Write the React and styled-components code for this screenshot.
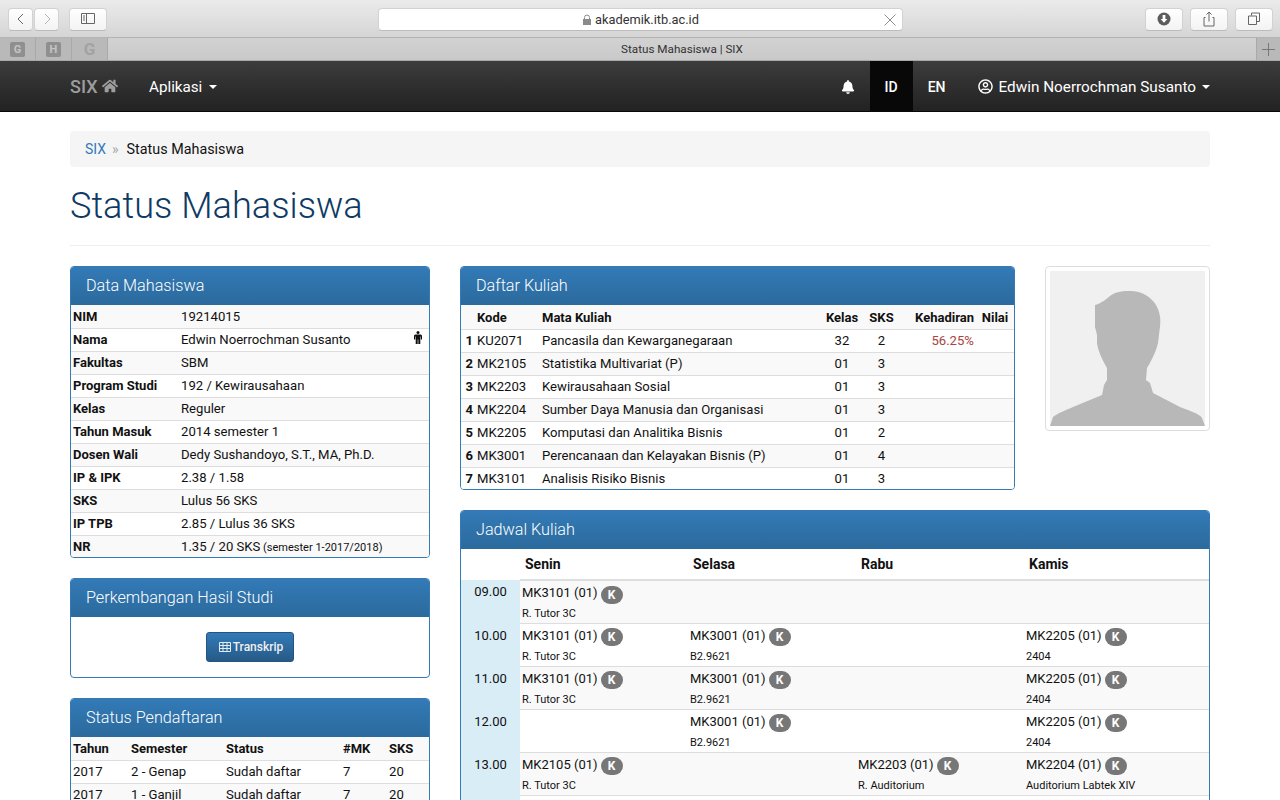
import React from "react";
import styled, { createGlobalStyle } from "styled-components";
import { FaHome, FaBell, FaRegUserCircle } from "react-icons/fa";

const GlobalStyle = createGlobalStyle`
  html, body {
    margin: 0;
    padding: 0;
    height: 800px;
    overflow: hidden;
    background: #fff;
    font-family: Roboto, "Liberation Sans", sans-serif;
    font-size: 14px;
    color: #111;
  }
  * { box-sizing: border-box; }
`;

const Toolbar = styled.div`
  height: 38px;
  display: flex;
  align-items: center;
  padding: 1px 7px 0 8px;
  background: linear-gradient(#ebebeb, #d5d5d5);
  border-bottom: 1px solid #b4b4b4;
`;

const ToolButton = styled.div`
  width: ${props => props.$w || 38}px;
  height: 23px;
  margin-left: ${props => props.$ml || 0}px;
  background: linear-gradient(#ffffff, #f3f3f3);
  border: 1px solid #d2d2d2;
  border-bottom-color: #bcbcbc;
  border-radius: 4px;
  display: flex;
  align-items: center;
  justify-content: center;
  flex: none;
`;

const UrlBar = styled.div`
  width: 525px;
  height: 23px;
  margin-left: 271px;
  margin-right: 242px;
  flex: none;
  position: relative;
  background: #fff;
  border: 1px solid #d2d2d2;
  border-bottom-color: #bcbcbc;
  border-radius: 4px;
  display: flex;
  align-items: center;
  justify-content: center;
  gap: 3px;
  font-size: 12.8px;
  color: #333;
`;

const UrlClose = styled.svg`
  position: absolute;
  right: 6px;
  top: 5px;
`;

const TabBar = styled.div`
  height: 23px;
  display: flex;
  background: linear-gradient(#d2d2d2, #c9c9c9);
  border-bottom: 1px solid #a8a8a8;
`;

const FavTab = styled.div`
  width: 36px;
  background: #b9b9b9;
  border-right: 1px solid #a9a9a9;
  display: flex;
  align-items: center;
  justify-content: center;
`;

const FavIcon = styled.span`
  width: 15px;
  height: 15px;
  border-radius: 2px;
  background: ${props => (props.$plain ? "transparent" : "#8f8f8f")};
  color: ${props => (props.$plain ? "#a2a2a2" : "#c4c4c4")};
  font-size: ${props => (props.$plain ? 17 : 11)}px;
  font-weight: 700;
  display: flex;
  align-items: center;
  justify-content: center;
`;

const ActiveTab = styled.div`
  flex: 1;
  text-align: center;
  font-size: 11.7px;
  line-height: 23px;
  color: #333;
`;

const NewTab = styled.div`
  width: 24px;
  background: #b9b9b9;
  border-left: 1px solid #a9a9a9;
  display: flex;
  align-items: center;
  justify-content: center;
`;

const Navbar = styled.nav`
  height: 51px;
  padding: 0 70px;
  display: flex;
  align-items: stretch;
  background: linear-gradient(#3c3c3c, #222222);
  border-bottom: 1px solid #080808;
  color: #fff;
`;

const Brand = styled.div`
  display: flex;
  align-items: center;
  gap: 4px;
  font-size: 18px;
  font-weight: 500;
  color: #9d9d9d;
  width: 64px;
`;

const NavItem = styled.div`
  display: flex;
  align-items: center;
  gap: ${props => props.$gap || 0}px;
  padding: 1px ${props => (props.$last ? 0 : 15)}px 0 15px;
  margin-left: ${props => (props.$last ? 2 : 0)}px;
  font-size: ${props => props.$size || 14}px;
  font-weight: ${props => props.$weight || 500};
  background: ${props => (props.$active ? "#080808" : "transparent")};
`;

const Spacer = styled.div`
  flex: 1;
`;

const Caret = styled.span`
  width: 0;
  height: 0;
  margin-left: ${props => props.$ml ?? 7}px;
  border-top: 4px solid #fff;
  border-left: 4px solid transparent;
  border-right: 4px solid transparent;
`;

const Container = styled.main`
  padding: 19px 70px 0;
`;

const Breadcrumb = styled.div`
  height: 36px;
  padding: 0 15px;
  display: flex;
  align-items: center;
  background: #f5f5f5;
  border-radius: 4px;
  font-size: 14px;
`;

const CrumbLink = styled.span`
  color: #337ab7;
`;

const CrumbSep = styled.span`
  color: #aaa;
  margin: 0 8px 0 6px;
`;

const CrumbCurrent = styled.span`
  font-size: 14.35px;
`;

const Title = styled.h1`
  margin: 19px 0 19px;
  font-size: 36.2px;
  line-height: 40px;
  font-weight: 300;
  color: #0e3a63;
`;

const Rule = styled.hr`
  margin: 0 0 20px;
  border: 0;
  border-top: 1px solid #eee;
`;

const Columns = styled.div`
  display: grid;
  grid-template-columns: 360px 750px;
  gap: 30px;
  align-items: start;
`;

const TopRow = styled.div`
  display: grid;
  grid-template-columns: 555px 165px;
  gap: 30px;
  align-items: start;
`;

const Panel = styled.section`
  margin-bottom: 20px;
  border: 1px solid #337ab7;
  border-radius: 4px;
  overflow: hidden;
  background: #fff;
`;

const PanelHeading = styled.h3`
  margin: 0;
  height: 38px;
  padding: 0 15px 2px;
  display: flex;
  align-items: center;
  font-size: 16.2px;
  font-weight: 300;
  color: #fff;
  background: linear-gradient(#337ab7, #2b6a9c);
`;

const PanelBody = styled.div`
  height: 60px;
  display: flex;
  align-items: center;
  justify-content: center;
`;

const Button = styled.div`
  height: 30px;
  padding: 0 10px 0 12px;
  display: flex;
  align-items: center;
  gap: 2px;
  border: 1px solid #245580;
  border-radius: 3px;
  font-size: 12px;
  font-weight: 500;
  color: #f0f0f0;
  background: linear-gradient(#337ab7, #265a88);
`;

const Table = styled.table`
  width: 100%;
  margin-bottom: -1px;
  table-layout: fixed;
  border-collapse: collapse;
  font-size: 13px;
`;

const Row = styled.tr`
  height: ${props => props.$h || 23}px;
  background: ${props => (props.$striped ? "#f9f9f9" : "#fff")};
  &:not(:first-child) { border-top: 1px solid #ddd; }
`;

const Th = styled.th`
  padding: ${props => (props.$low ? 2 : 0)}px 2px 0;
  text-align: ${props => props.$align || "left"};
  font-weight: 700;
  color: #111;
`;

const Td = styled.td`
  padding: 0 2px;
  position: relative;
  text-align: ${props => props.$align || "left"};
  color: ${props => props.$color || "#111"};
  font-size: ${props => (props.$bold ? 13 : 13.13)}px;
  font-weight: ${props => (props.$bold ? 700 : 400)};
`;

const Small = styled.small`
  font-size: 11px;
`;

const GenderIcon = styled.svg`
  position: absolute;
  right: 7px;
  top: 2px;
`;

const Photo = styled.div`
  width: 165px;
  height: 165px;
  padding: 4px;
  border: 1px solid #ddd;
  border-radius: 4px;
  background: #fff;
`;

const ScheduleTable = styled.table`
  width: 100%;
  table-layout: fixed;
  border-collapse: collapse;
`;

const DayRow = styled.tr`
  height: 31px;
`;

const DayTh = styled.th`
  padding: 0 5px;
  text-align: left;
  font-size: 14px;
  font-weight: 700;
  color: #111;
  border-bottom: ${props => (props.$blank ? "0" : "2px solid #ddd")};
`;

const HourRow = styled.tr`
  height: 43px;
  background: ${props => (props.$striped ? "#f9f9f9" : "#fff")};
  border-bottom: 1px solid #ddd;
`;

const HourCell = styled.td`
  padding: 4px 0 0;
  vertical-align: top;
  text-align: center;
  font-size: 13px;
  color: #111;
  background: #d9edf7;
  border-bottom: 1px solid #d9edf7;
`;

const SlotCell = styled.td`
  padding: 2px 2px 0;
  vertical-align: top;
`;

const SlotTop = styled.div`
  display: flex;
  align-items: center;
  gap: 3px;
  height: 19px;
  font-size: 13px;
  color: #111;
`;

const Badge = styled.span`
  width: 22px;
  height: 18px;
  margin-top: 4px;
  border-radius: 9px;
  background: #777;
  color: #fff;
  font-size: 12px;
  font-weight: 700;
  display: flex;
  align-items: center;
  justify-content: center;
`;

const Room = styled.div`
  margin-top: 5px;
  font-size: 11px;
  line-height: 14px;
  color: #111;
`;

const dataRows = [
  ["NIM", "19214015"],
  ["Nama", "Edwin Noerrochman Susanto"],
  ["Fakultas", "SBM"],
  ["Program Studi", "192 / Kewirausahaan"],
  ["Kelas", "Reguler"],
  ["Tahun Masuk", "2014 semester 1"],
  ["Dosen Wali", "Dedy Sushandoyo, S.T., MA, Ph.D."],
  ["IP & IPK", "2.38 / 1.58"],
  ["SKS", "Lulus 56 SKS"],
  ["IP TPB", "2.85 / Lulus 36 SKS"],
  ["NR", "1.35 / 20 SKS"],
];

const courses = [
  ["KU2071", "Pancasila dan Kewarganegaraan", "32", "2", "56.25%"],
  ["MK2105", "Statistika Multivariat (P)", "01", "3", ""],
  ["MK2203", "Kewirausahaan Sosial", "01", "3", ""],
  ["MK2204", "Sumber Daya Manusia dan Organisasi", "01", "3", ""],
  ["MK2205", "Komputasi dan Analitika Bisnis", "01", "2", ""],
  ["MK3001", "Perencanaan dan Kelayakan Bisnis (P)", "01", "4", ""],
  ["MK3101", "Analisis Risiko Bisnis", "01", "3", ""],
];

const tutor = ["MK3101 (01)", "R. Tutor 3C"];
const bisnis = ["MK3001 (01)", "B2.9621"];
const komputasi = ["MK2205 (01)", "2404"];

const schedule = [
  ["09.00", tutor, null, null, null],
  ["10.00", tutor, bisnis, null, komputasi],
  ["11.00", tutor, bisnis, null, komputasi],
  ["12.00", null, bisnis, null, komputasi],
  ["13.00", ["MK2105 (01)", "R. Tutor 3C"], null, ["MK2203 (01)", "R. Auditorium"], ["MK2204 (01)", "Auditorium Labtek XIV"]],
  ["", null, null, null, null],
];

const Line = ({ d, w = 16, h = 16 }) => (
  <svg width={w} height={h} viewBox={`0 0 ${w} ${h}`} fill="none" stroke="#666" strokeWidth="1">
    <path d={d} />
  </svg>
);

const Slot = ({ item }) => (
  <SlotCell>
    {item && (
      <>
        <SlotTop>
          {item[0]} <Badge>K</Badge>
        </SlotTop>
        <Room>{item[1]}</Room>
      </>
    )}
  </SlotCell>
);

export default function App() {
  return (
    <>
      <GlobalStyle />
      <Toolbar>
        <ToolButton $w={25}>
          <Line d="M10 3 L5 8 L10 13" />
        </ToolButton>
        <ToolButton $w={25} $ml={1}>
          <svg width="16" height="16" viewBox="0 0 16 16" fill="none" stroke="#b5b5b5">
            <path d="M6 3 L11 8 L6 13" />
          </svg>
        </ToolButton>
        <ToolButton $ml={10}>
          <Line d="M1.5 2.5 H14.5 V12.5 H1.5 Z M6.5 2.5 V12.5 M3 5 H5 M3 7 H5 M3 9 H5" />
        </ToolButton>
        <UrlBar>
          <svg width="10" height="11" viewBox="0 0 10 11">
            <path d="M2.5 5 V3.5 a2.5 2.5 0 0 1 5 0 V5" fill="none" stroke="#8a8a8a" />
            <rect x="1" y="5" width="8" height="6" fill="#8a8a8a" />
          </svg>
          akademik.itb.ac.id
          <UrlClose width="12" height="12" viewBox="0 0 12 12" stroke="#8c8c8c" strokeWidth="1">
            <path d="M0.5 0.5 L11.5 11.5 M11.5 0.5 L0.5 11.5" />
          </UrlClose>
        </UrlBar>
        <ToolButton>
          <svg width="14" height="14" viewBox="0 0 14 14">
            <circle cx="7" cy="7" r="6.5" fill="#5c5c5c" />
            <path d="M5.6 3 H8.4 V7 H10.4 L7 10.8 L3.6 7 H5.6 Z" fill="#fff" />
          </svg>
        </ToolButton>
        <ToolButton $ml={7}>
          <Line d="M4.5 6.5 H3 V15 H13 V6.5 H11.5 M8 10.5 V1 M5.5 3.5 L8 1 L10.5 3.5" />
        </ToolButton>
        <ToolButton $ml={7}>
          <Line d="M5.5 4.5 V2 H13.5 V10.5 H10.5 M2.5 5 H10.5 V13.5 H2.5 Z" />
        </ToolButton>
      </Toolbar>
      <TabBar>
        <FavTab><FavIcon>G</FavIcon></FavTab>
        <FavTab><FavIcon>H</FavIcon></FavTab>
        <FavTab><FavIcon $plain>G</FavIcon></FavTab>
        <ActiveTab>Status Mahasiswa | SIX</ActiveTab>
        <NewTab>
          <svg width="13" height="13" viewBox="0 0 13 13" stroke="#777">
            <path d="M6.5 0 V13 M0 6.5 H13" />
          </svg>
        </NewTab>
      </TabBar>
      <Navbar>
        <Brand>SIX <FaHome size={16} /></Brand>
        <NavItem $size={15.2} $weight={400}>Aplikasi<Caret /></NavItem>
        <Spacer />
        <NavItem><FaBell size={14} /></NavItem>
        <NavItem $active>ID</NavItem>
        <NavItem>EN</NavItem>
        <NavItem $last $size={15.3} $weight={400} $gap={6}>
          <FaRegUserCircle size={15} />
          Edwin Noerrochman Susanto
          <Caret $ml={0} />
        </NavItem>
      </Navbar>
      <Container>
        <Breadcrumb>
          <CrumbLink>SIX</CrumbLink>
          <CrumbSep>»</CrumbSep>
          <CrumbCurrent>Status Mahasiswa</CrumbCurrent>
        </Breadcrumb>
        <Title>Status Mahasiswa</Title>
        <Rule />
        <Columns>
          <div>
            <Panel>
              <PanelHeading>Data Mahasiswa</PanelHeading>
              <Table>
                <colgroup>
                  <col width="108" />
                  <col />
                </colgroup>
                <tbody>
                  {dataRows.map(([label, value], i) => (
                    <Row key={label} $striped={i % 2 === 0}>
                      <Td $bold>{label}</Td>
                      <Td>
                        {value}
                        {label === "NR" && <Small> (semester 1-2017/2018)</Small>}
                        {label === "Nama" && (
                          <GenderIcon width="8" height="13" viewBox="0 0 8 13" fill="#111">
                            <circle cx="4" cy="1.5" r="1.5" />
                            <path d="M1.4 3.4 H6.6 Q8 3.4 8 5 V8.4 H6.8 V5.6 H6.3 V13 H4.3 V8.6 H3.7 V13 H1.7 V5.6 H1.2 V8.4 H0 V5 Q0 3.4 1.4 3.4 Z" />
                          </GenderIcon>
                        )}
                      </Td>
                    </Row>
                  ))}
                </tbody>
              </Table>
            </Panel>
            <Panel>
              <PanelHeading>Perkembangan Hasil Studi</PanelHeading>
              <PanelBody>
                <Button>
                  <svg width="12" height="10" viewBox="0 0 12 10" fill="none" stroke="#e4edf5" strokeWidth="1">
                    <path d="M0.5 0.5 H11.5 V9.5 H0.5 Z M0.5 3.5 H11.5 M0.5 6.5 H11.5 M4 0.5 V9.5 M8 0.5 V9.5" />
                  </svg>
                  Transkrip
                </Button>
              </PanelBody>
            </Panel>
            <Panel>
              <PanelHeading>Status Pendaftaran</PanelHeading>
              <Table>
                <colgroup>
                  <col width="58" />
                  <col width="95" />
                  <col width="117" />
                  <col width="46" />
                  <col />
                </colgroup>
                <tbody>
                  <Row $striped>
                    <Th>Tahun</Th>
                    <Th>Semester</Th>
                    <Th>Status</Th>
                    <Th>#MK</Th>
                    <Th>SKS</Th>
                  </Row>
                  <Row>
                    <Td>2017</Td>
                    <Td>2 - Genap</Td>
                    <Td>Sudah daftar</Td>
                    <Td>7</Td>
                    <Td>20</Td>
                  </Row>
                  <Row $striped>
                    <Td>2017</Td>
                    <Td>1 - Ganjil</Td>
                    <Td>Sudah daftar</Td>
                    <Td>7</Td>
                    <Td>20</Td>
                  </Row>
                </tbody>
              </Table>
            </Panel>
          </div>
          <div>
            <TopRow>
              <Panel>
                <PanelHeading>Daftar Kuliah</PanelHeading>
                <Table>
                  <colgroup>
                    <col width="14" />
                    <col width="65" />
                    <col width="281" />
                    <col width="42" />
                    <col width="37" />
                    <col width="76" />
                    <col />
                  </colgroup>
                  <tbody>
                    <Row $h={24} $striped>
                      <Th $low />
                      <Th $low>Kode</Th>
                      <Th $low>Mata Kuliah</Th>
                      <Th $low $align="center">Kelas</Th>
                      <Th $low $align="center">SKS</Th>
                      <Th $low $align="right">Kehadiran</Th>
                      <Th $low $align="center">Nilai</Th>
                    </Row>
                    {courses.map((c, i) => (
                      <Row key={c[0]} $striped={i % 2 === 1}>
                        <Td $bold $align="right">{i + 1}</Td>
                        <Td>{c[0]}</Td>
                        <Td>{c[1]}</Td>
                        <Td $align="center">{c[2]}</Td>
                        <Td $align="center">{c[3]}</Td>
                        <Td $align="right" $color="#a94442">{c[4]}</Td>
                        <Td />
                      </Row>
                    ))}
                  </tbody>
                </Table>
              </Panel>
              <Photo>
                <svg width="155" height="155" viewBox="0 0 155 155">
                  <rect width="155" height="155" fill="#f0f0f0" />
                  <path
                    d="M45 34 C52 32 56 28 60 25 C67 20 74 20 80 20 C92 20 101 26 106 34 C110 41 111 48 110 56 C109 62 109 66 108 72 C106 80 103 87 97 97 L96 109 L100 112 L103 122 L130 136 C140 140 150 143 152 147 L155 155 L0 155 L3 146 C8 142 16 139 23 136 L52 124 L54 114 L57 109 L57 97 C52 88 48 80 47 72 L47 64 L45 56 Z"
                    fill="#b8b8b8"
                  />
                </svg>
              </Photo>
            </TopRow>
            <Panel>
              <PanelHeading>Jadwal Kuliah</PanelHeading>
              <ScheduleTable>
                <colgroup>
                  <col width="59" />
                  <col width="168" />
                  <col width="168" />
                  <col width="168" />
                  <col width="168" />
                  <col />
                </colgroup>
                <thead>
                  <DayRow>
                    <DayTh $blank />
                    <DayTh>Senin</DayTh>
                    <DayTh>Selasa</DayTh>
                    <DayTh>Rabu</DayTh>
                    <DayTh>Kamis</DayTh>
                    <DayTh />
                  </DayRow>
                </thead>
                <tbody>
                  {schedule.map((s, i) => (
                    <HourRow key={i} $striped={i % 2 === 0}>
                      <HourCell>{s[0]}</HourCell>
                      <Slot item={s[1]} />
                      <Slot item={s[2]} />
                      <Slot item={s[3]} />
                      <Slot item={s[4]} />
                      <SlotCell />
                    </HourRow>
                  ))}
                </tbody>
              </ScheduleTable>
            </Panel>
          </div>
        </Columns>
      </Container>
    </>
  );
}
